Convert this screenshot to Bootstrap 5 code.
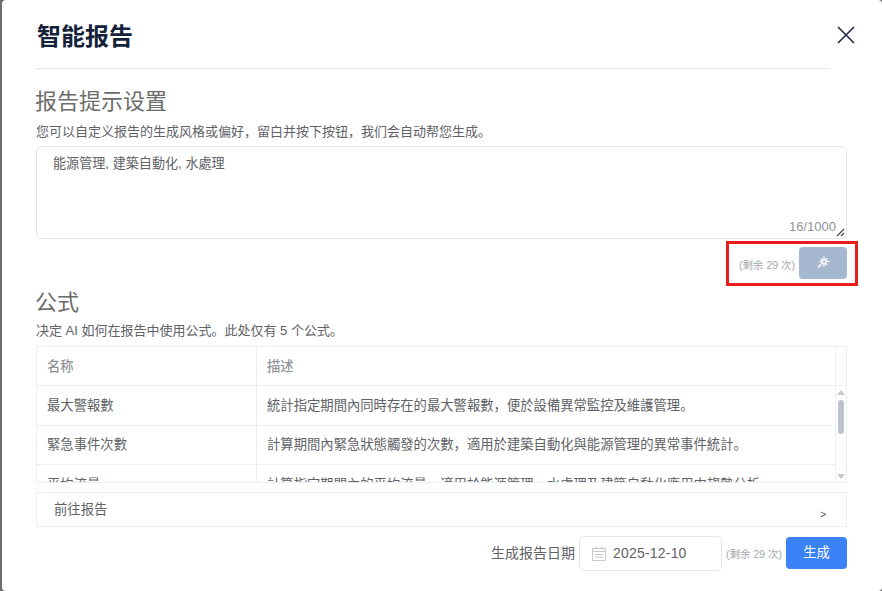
<!DOCTYPE html>
<html lang="zh">
<head>
<meta charset="utf-8">
<title>智能报告</title>
<link href="https://cdn.jsdelivr.net/npm/bootstrap@5.3.0/dist/css/bootstrap.min.css" rel="stylesheet">
<style>
html,body{height:591px;overflow:hidden;background:#6e6e6e;}
body{font-family:"Liberation Sans","Noto Sans CJK SC",sans-serif;font-size:13.33px;color:#606266;}
.sheet{position:relative;margin-left:2px;height:591px;background:#fff;padding:0 35px 0 34px;border-radius:4px;}
.head-row{height:69px;border-bottom:1px solid #e5e5e5;margin-right:17px;}
.head-title{font-size:24px;font-weight:700;color:#16223a;line-height:1;margin:0 0 0 1px;padding-top:25px;}
.close-x{position:absolute;top:25px;left:834px;width:20px;height:20px;border:0;background:none;padding:0;display:block;}
.sec-title{font-size:22px;font-weight:400;color:#6b6b6b;line-height:30px;margin:0 0 0 -1px;}
.sec-first{margin-top:18px;}
.sec-desc{font-size:13px;line-height:18px;color:#606266;margin:6px 0 0;}
.sec-desc-b{margin-top:4px;}
.prompt-box{position:relative;height:93px;margin-top:5px;border:1px solid #e4e6ea;border-radius:6px;padding:8px 16px;font-size:13.1px;line-height:18px;color:#606266;}
.prompt-count{position:absolute;right:10px;bottom:3px;font-size:13px;line-height:16px;color:#909399;}
.prompt-grip{position:absolute;right:1px;bottom:1px;display:block;}
.left-note{font-size:10.5px;color:#a3a6ad;line-height:14px;}
.gen-row{height:32px;margin-top:8px;}
.wand-btn{width:48px;height:32px;padding:0;border:0;border-radius:4px;background:#a6b8cf;}
.form-sec{margin-top:9px;}
.tbl-wrap{margin-top:6px;height:137px;border:1px solid #ebeef5;overflow:hidden;}
.tbl-main{width:799px;}
.tbl-row{height:39.5px;border-bottom:1px solid #ebeef5;line-height:18px;font-size:13.33px;color:#606266;}
.tbl-head{height:39px;color:#909399;font-weight:500;}
.tbl-a{width:220px;padding:1px 0 0 10px;border-right:1px solid #ebeef5;height:100%;}
.tbl-b{padding:1px 0 0 10px;height:100%;flex:1;white-space:nowrap;overflow:hidden;}
.fake-bar{width:11px;border-left:1px solid #ebeef5;}
.fake-top{height:39px;border-bottom:1px solid #ebeef5;}
.fake-track{position:relative;height:96px;}
.fake-up,.fake-down{position:absolute;left:1px;width:0;height:0;border-left:4px solid transparent;border-right:4px solid transparent;}
.fake-up{top:4px;border-bottom:5px solid #c3c8d0;}
.fake-down{bottom:3px;border-top:5px solid #c3c8d0;}
.fake-thumb{position:absolute;left:2px;top:14px;width:6px;height:34px;border-radius:3px;background:#bcc3cc;}
.goto-row{height:35px;margin-top:9px;border:1px solid #ebeef5;padding:1px 20px 0 17px;font-size:13.33px;color:#606266;}
.goto-arrow{font-size:10px;color:#555;padding-top:9px;}
.foot-row{margin-top:9px;height:35px;}
.foot-label{font-size:14px;color:#606266;}
.date-box{width:143px;height:35px;border:1px solid #e4e6ea;border-radius:5px;padding-left:12px;font-size:14px;color:#606266;letter-spacing:.2px;gap:7px;}
.gen-btn{width:61px;height:32px;padding:0;border:0;border-radius:4px;background:#3b82f6;color:#fff;font-size:13.33px;margin-bottom:1px;}
.mark-box{position:absolute;left:724px;top:241px;width:132px;height:45px;border:3px solid #ea1c1c;pointer-events:none;}
</style>
</head>
<body>
<div class="sheet">
  <div class="head-row"><h1 class="head-title">智能报告</h1></div>
  <button class="close-x" aria-label="关闭"><svg width="20" height="20" viewBox="0 0 20 20"><path d="M2 2 18 18M18 2 2 18" stroke="#1c2740" stroke-width="1.6" fill="none"/></svg></button>

  <h2 class="sec-title sec-first">报告提示设置</h2>
  <p class="sec-desc">您可以自定义报告的生成风格或偏好，留白并按下按钮，我们会自动帮您生成。</p>
  <div class="prompt-box">能源管理, 建築自動化, 水處理
    <span class="prompt-count">16/1000</span>
    <svg class="prompt-grip" width="9" height="9" viewBox="0 0 9 9"><path d="M1 8 8 1M5 8 8 5" stroke="#444" stroke-width="1.2" fill="none"/></svg>
  </div>
  <div class="gen-row d-flex justify-content-end align-items-center gap-1">
    <span class="left-note mt-1">(剩余 29 次)</span>
    <button class="wand-btn d-flex align-items-center justify-content-center" aria-label="生成提示">
      <svg width="14" height="14" viewBox="0 0 14 14"><path d="M8 1v3M8 7v3M4 5.5h2.5M10 5.5h3M5.3 3 6.7 4.3M10.7 2.8 9.4 4.2M9.4 7l1.4 1.4M6.4 7 2.5 11" stroke="#fff" stroke-width="1.4" stroke-linecap="round" fill="none"/></svg>
    </button>
  </div>

  <div class="form-sec">
    <h2 class="sec-title">公式</h2>
    <p class="sec-desc sec-desc-b">决定 AI 如何在报告中使用公式。此处仅有 5 个公式。</p>
    <div class="tbl-wrap d-flex">
      <div class="tbl-main">
        <div class="tbl-row tbl-head d-flex align-items-center"><div class="tbl-a d-flex align-items-center">名称</div><div class="tbl-b d-flex align-items-center">描述</div></div>
        <div class="tbl-row d-flex align-items-center"><div class="tbl-a d-flex align-items-center">最大警報數</div><div class="tbl-b d-flex align-items-center">統計指定期間內同時存在的最大警報數，便於設備異常監控及維護管理。</div></div>
        <div class="tbl-row d-flex align-items-center"><div class="tbl-a d-flex align-items-center">緊急事件次數</div><div class="tbl-b d-flex align-items-center">計算期間內緊急狀態觸發的次數，適用於建築自動化與能源管理的異常事件統計。</div></div>
        <div class="tbl-row d-flex align-items-center"><div class="tbl-a d-flex align-items-center">平均流量</div><div class="tbl-b d-flex align-items-center">計算指定期間內的平均流量，適用於能源管理、水處理及建築自動化應用中趨勢分析。</div></div>
      </div>
      <div class="fake-bar">
        <div class="fake-top"></div>
        <div class="fake-track"><span class="fake-up"></span><span class="fake-thumb"></span><span class="fake-down"></span></div>
      </div>
    </div>
    <div class="goto-row d-flex justify-content-between align-items-center"><span>前往报告</span><span class="goto-arrow">&gt;</span></div>
    <div class="foot-row d-flex justify-content-end align-items-center">
      <span class="foot-label me-1">生成报告日期</span>
      <div class="date-box d-flex align-items-center">
        <svg width="14" height="15" viewBox="0 0 14 15"><path d="M.5 2.5h13v12H.5zM.5 5.5h13M4 .5v3M10 .5v3M3 8.5h8M3 11h8" stroke="#c5c9d0" stroke-width="1" fill="none"/></svg>
        <span>2025-12-10</span>
      </div>
      <span class="left-note ms-1 me-1">(剩余 29 次)</span>
      <button class="gen-btn">生成</button>
    </div>
  </div>
  <div class="mark-box"></div>
</div>
<script src="https://cdn.jsdelivr.net/npm/bootstrap@5.3.0/dist/js/bootstrap.bundle.min.js"></script>
</body>
</html>
